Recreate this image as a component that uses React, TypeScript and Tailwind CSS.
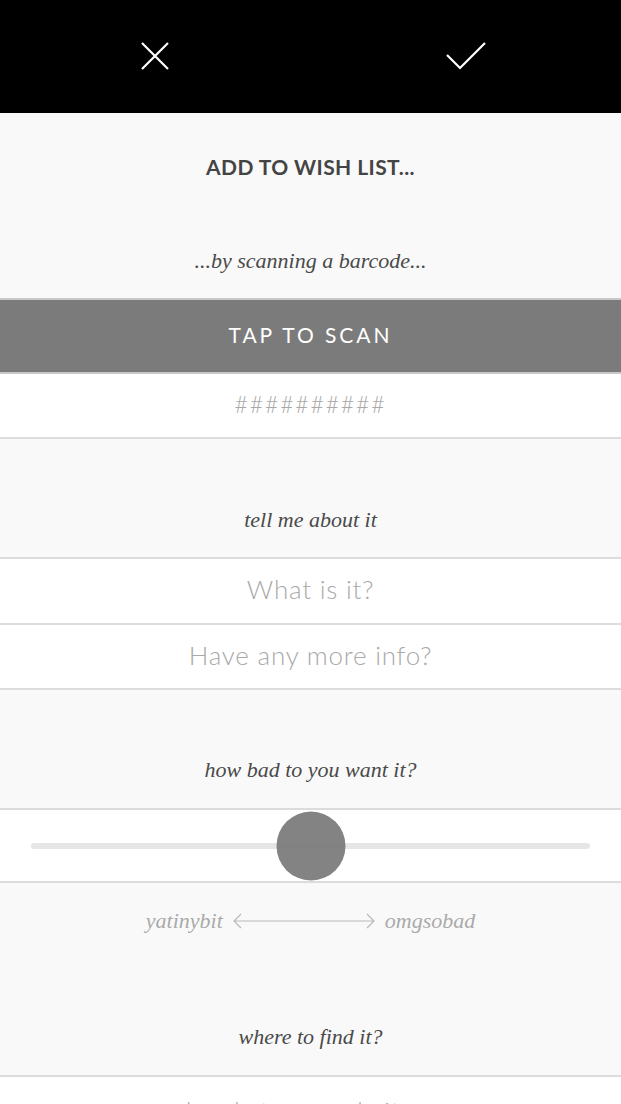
const serif = { fontFamily: "'Liberation Serif', 'DejaVu Serif', serif" };

const Prompt = ({ children, className = "" }: { children: React.ReactNode; className?: string }) => (
  <p className={`italic text-[22px] text-[#4a4a4a] leading-none text-center ${className}`} style={serif}>
    {children}
  </p>
);

const Field = ({ placeholder, className = "" }: { placeholder: string; className?: string }) => (
  <div className={`bg-white border-b-2 border-[#dcdcdc] flex items-center justify-center ${className}`}>
    <span className="-mt-[3px] font-['Lato',sans-serif] font-light text-[26px] tracking-[0.03em] text-[#a9a9a9]">{placeholder}</span>
  </div>
);

export default function App() {
  return (
    <div className="w-[621px] h-[1104px] overflow-hidden bg-[#f9f9f9] font-['Lato',sans-serif]">
      {/* Top bar */}
      <div className="h-[113px] bg-black grid grid-cols-2 place-items-center">
        <svg width="28" height="28" viewBox="0 0 28 28" className="-mt-[2px]">
          <path d="M1 1L27 27M27 1L1 27" stroke="white" strokeWidth="2.2" fill="none" />
        </svg>
        <svg width="40" height="28" viewBox="0 0 40 28" className="-mt-[2px]">
          <path d="M1 13L14 26L39 1" stroke="white" strokeWidth="2.2" fill="none" />
        </svg>
      </div>

      {/* Barcode section */}
      <div className="h-[185px] flex flex-col items-center">
        <h1 className="mt-[43px] text-[21px] font-bold tracking-[0.02em] text-[#444] leading-none">ADD TO WISH LIST...</h1>
        <Prompt className="mt-[73px]">...by scanning a barcode...</Prompt>
      </div>
      <div className="h-[76px] bg-[#7b7b7b] border-y-2 border-[#c8c8c8] flex items-center justify-center">
        <span className="-mt-[3px] text-white text-[21px] tracking-[0.14em] font-normal">TAP TO SCAN</span>
      </div>
      <Field placeholder="##########" className="h-[65px] [&>span]:tracking-[0.08em] [&>span]:text-[23px]" />

      {/* About */}
      <div className="h-[120px] border-b-2 border-[#dcdcdc] flex flex-col items-center justify-end pb-[26px]">
        <Prompt>tell me about it</Prompt>
      </div>
      <Field placeholder="What is it?" className="h-[66px]" />
      <Field placeholder="Have any more info?" className="h-[65px]" />

      {/* Desire */}
      <div className="h-[120px] border-b-2 border-[#dcdcdc] flex flex-col items-center justify-end pb-[27px]">
        <Prompt>how bad to you want it?</Prompt>
      </div>
      <div className="h-[73px] bg-white border-b-2 border-[#dcdcdc] flex items-center px-[31px]">
        <div className="relative w-full h-[6px] rounded-full bg-[#e6e6e6]">
          <div className="absolute left-1/2 top-1/2 -translate-x-1/2 -translate-y-1/2 w-[69px] h-[69px] rounded-full bg-[#7c7c7c]/95" />
        </div>
      </div>

      {/* Where */}
      <div className="h-[194px] border-b-2 border-[#dcdcdc] flex flex-col items-center">
        <div className="mt-[21px] flex items-center gap-[10px] italic text-[22px] text-[#aaa]" style={serif}>
          <span>yatinybit</span>
          <svg width="142" height="16" viewBox="0 0 142 16">
            <path d="M8 1L1 8L8 15M134 1L141 8L134 15M1 8H141" stroke="#b9b9b9" strokeWidth="1.2" fill="none" />
          </svg>
          <span>omgsobad</span>
        </div>
        <Prompt className="mt-[89px]">where to find it?</Prompt>
      </div>
      <div className="bg-white h-[80px] flex justify-center pt-[12px]">
        <span className="font-light text-[26px] tracking-[0.03em] text-[#a9a9a9] leading-none mt-[9px]">local store, website...</span>
      </div>
    </div>
  );
}
